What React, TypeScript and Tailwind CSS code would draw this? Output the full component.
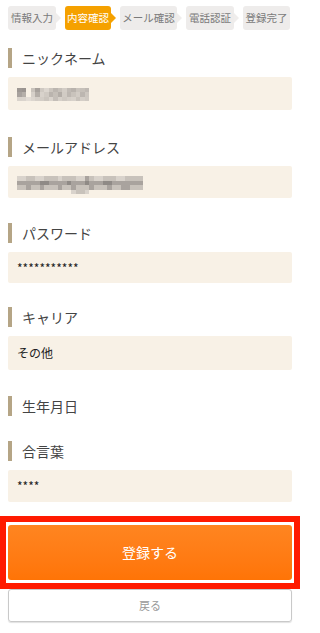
import React from "react";

type Step = { label: string; w: string; active?: boolean; last?: boolean };

const steps: Step[] = [
  { label: "情報入力", w: "w-[48px]" },
  { label: "内容確認", w: "w-[46px]", active: true },
  { label: "メール確認", w: "w-[57px]" },
  { label: "電話認証", w: "w-[48px]" },
  { label: "登録完了", w: "w-[47px]", last: true },
];

function StepBar() {
  return (
    <div className="flex items-center pl-[8px] pt-[6px] gap-[4px]">
      {steps.map((s) => (
        <div key={s.label} className="flex items-center">
          <div
            className={
              "h-[24px] flex items-center justify-center rounded-[3px] text-[10.5px] leading-none " +
              s.w +
              " " +
              (s.active ? "bg-[#f5a100] text-white" : "bg-[#eeeceb] text-[#7a7a7a]")
            }
          >
            {s.label}
          </div>
          {!s.last && (
            <div
              className={
                "w-0 h-0 border-y-[5px] border-y-transparent border-l-[5px] " +
                (s.active ? "border-l-[#f5a100]" : "border-l-[#efedec]")
              }
            />
          )}
        </div>
      ))}
    </div>
  );
}

function Label({ text, mt }: { text: string; mt: string }) {
  return (
    <div className={"flex items-center h-[20px] " + mt}>
      <div className="w-[4px] h-[20px] bg-[#b5a586]" />
      <div className="ml-[10px] text-[14px] text-[#444] leading-none">{text}</div>
    </div>
  );
}

function Box({ h, children }: { h: string; children?: React.ReactNode }) {
  return (
    <div className={"mt-[9px] bg-[#f8f1e6] rounded-[2px] flex items-center pl-[9px] " + h}>
      {children}
    </div>
  );
}

function Mosaic({ rows }: { rows: string[][] }) {
  return (
    <div className="flex flex-col">
      {rows.map((r, i) => (
        <div key={i} className="flex">
          {r.map((c, j) => (
            <div key={j} className="w-[4.5px] h-[4.5px]" style={{ background: c }} />
          ))}
        </div>
      ))}
    </div>
  );
}

const T = "transparent";
const nickRows: string[][] = [
  ["#9e9894", "#9a9490", T, "#c9c3bc", "#a7a19c", "#cfc9c2", "#dcd6cf", "#cbc5be", "#bcb6b0", "#c7c1ba", "#d3cdc6", "#c0bab4", "#b9b3ad", "#cac4bd", "#c6c0b9", "#bfb9b3"],
  ["#a8a29e", "#b5afa9", T, "#d6d0c9", "#b4aea8", "#d8d2cb", "#d0cac3", "#bab4ae", "#c5bfb8", "#b3ada7", "#d1cbc4", "#bdb7b1", "#c9c3bc", "#d2ccc5", "#bcb6b0", "#cdc7c0"],
  ["#d9d3cc", "#dad4cd", "#e3ddd6", "#dcd6cf", "#d5cfc8", "#d3cdc6", "#cbc5be", "#d9d3cc", "#c4beb8", "#d6d0c9", "#cec8c1", "#d4cec7", "#d7d1ca", "#c8c2bb", "#d4cec7", "#cfc9c2"],
];

const e = (pattern: string) =>
  pattern.split("").map((ch) =>
    ch === "d" ? "#8f8a86" : ch === "m" ? "#a9a39e" : ch === "l" ? "#c8c2bb" : ch === "x" ? "#d9d3cc" : T
  );

const emailRows: string[][] = [
  e("xxllxxlllxlllxxmlxxlllxxllll"),
  e("mmmmmddmmmmdmmmdmmmddmmmmmmm"),
  e("llmllmlllmllmlllmlllmllmmlll"),
  e("............xllx............"),
];

export default function App() {
  return (
    <div className="w-[300px] h-[633px] bg-white font-['Noto_Sans_CJK_JP','Noto_Sans',sans-serif] overflow-hidden">
      <StepBar />
      <div className="px-[8px]">
        <Label text="ニックネーム" mt="mt-[18px]" />
        <Box h="h-[33px]">
          <div className="mt-[2px]">
            <Mosaic rows={nickRows} />
          </div>
        </Box>

        <Label text="メールアドレス" mt="mt-[27px]" />
        <Box h="h-[32px]">
          <div className="mt-[6px]">
            <Mosaic rows={emailRows} />
          </div>
        </Box>

        <Label text="パスワード" mt="mt-[25px]" />
        <Box h="h-[31px]">
          <span className="text-[12px] text-[#222]">***********</span>
        </Box>

        <Label text="キャリア" mt="mt-[24px]" />
        <Box h="h-[34px]">
          <span className="text-[12px] text-[#222]">その他</span>
        </Box>

        <Label text="生年月日" mt="mt-[26px]" />

        <Label text="合言葉" mt="mt-[25px]" />
        <Box h="h-[32px]">
          <span className="text-[12px] text-[#222]">****</span>
        </Box>
      </div>

      <div className="mt-[14px] border-[6px] border-[#ff1a00] px-[2px] py-[3px]">
        <div className="h-[55px] rounded-[3px] bg-gradient-to-b from-[#ff8520] to-[#ff7406] flex items-center justify-center text-white text-[14px]">
          登録する
        </div>
      </div>

      <div className="px-[8px]">
        <div className="h-[33px] border border-[#c9c9c9] rounded-[3px] shadow-[0_1px_1px_rgba(0,0,0,0.12)] flex items-center justify-center text-[11px] text-[#999]">
          戻る
        </div>
      </div>
    </div>
  );
}
